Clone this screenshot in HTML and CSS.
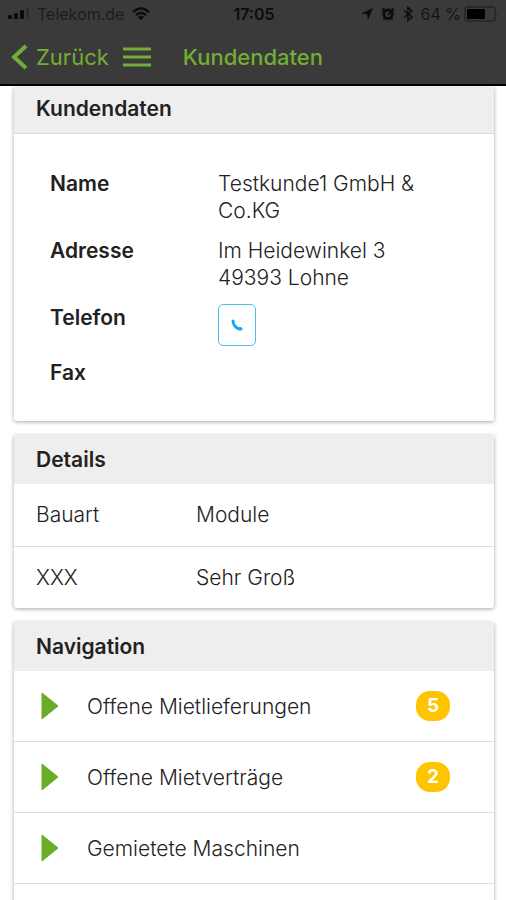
FILE: index.html
```html
<!DOCTYPE html>
<html lang="de">
<head>
<meta charset="utf-8">
<meta name="viewport" content="width=device-width, initial-scale=1">
<title>Kundendaten</title>
<link rel="stylesheet" href="styles.css">
</head>
<body>
<div class="app">
  <header class="topbar">
    <div class="status">
      <div class="status-left">
        <svg width="22" height="14" viewBox="0 0 22 14" aria-hidden="true">
          <rect x="0" y="8" width="4" height="4" rx="1"/><rect x="6" y="6" width="4" height="6" rx="1"/><rect x="12" y="3" width="4" height="9" rx="1"/><rect x="18" y="1" width="3" height="11" rx="1" opacity=".3"/>
        </svg>
        <span class="carrier">Telekom.de</span>
        <svg width="20" height="14" viewBox="0 0 20 14" aria-hidden="true">
          <path d="M2 5Q10-2 18 5M5 8.200Q10 4 15 8.200" fill="none" stroke="currentColor" stroke-width="2.400"/>
          <path d="M6.800 10Q10 7.500 13.200 10L10 13.200Z"/>
        </svg>
      </div>
      <span class="clock">17:05</span>
      <div class="status-right">
        <svg width="14" height="14" viewBox="0 0 14 14" aria-hidden="true"><path d="M13 1L8 13L7 7L1 6.500Z"/></svg>
        <svg width="14" height="14" viewBox="0 0 14 14" aria-hidden="true">
          <path d="M1 3.500L3.500 1M13 3.500L10.500 1M3.500 11.500L2.500 13M10.500 11.500L11.500 13" stroke="currentColor" stroke-width="1.500"/>
          <circle cx="7" cy="7.200" r="4.300" fill="none" stroke="currentColor" stroke-width="3"/>
          <path d="M7 8L9.500 5" stroke="currentColor" stroke-width="1.500"/>
        </svg>
        <svg width="12" height="16" viewBox="0 0 12 16" aria-hidden="true"><path d="M2 4.500L10 11L6 14.500V1.500L10 5L2 11.500" fill="none" stroke="currentColor" stroke-width="1.500"/></svg>
        <span class="percent">64 %</span>
        <svg class="battery" width="36" height="16" viewBox="0 0 36 16" aria-hidden="true">
          <rect x="1" y="1" width="30" height="14" rx="3" fill="none" stroke="#262626" stroke-width="1.500"/>
          <rect x="3" y="3" width="18" height="10" rx="1" fill="#000"/><path d="M33 6Q35 8 33 10Z" fill="#262626"/>
        </svg>
      </div>
    </div>
    <nav class="toolbar">
      <a class="back" href="#">
        <svg width="17" height="26" viewBox="0 0 17 26" aria-hidden="true"><path d="M15 2L3 13L15 24" fill="none" stroke="currentColor" stroke-width="4"/></svg>
        <span>Zurück</span>
      </a>
      <button class="menu" type="button" aria-label="Menü">
        <svg width="28" height="20" viewBox="0 0 28 20" aria-hidden="true"><path d="M0 2H28M0 10H28M0 18H28" stroke="currentColor" stroke-width="3"/></svg>
      </button>
      <h1 class="title">Kundendaten</h1>
    </nav>
  </header>

  <main class="content">
    <section class="card">
      <h2 class="card-head lined">Kundendaten</h2>
      <dl class="facts">
        <dt>Name</dt><dd>Testkunde1 GmbH &amp; Co.KG</dd>
        <dt>Adresse</dt><dd>Im Heidewinkel 3<br>49393 Lohne</dd>
        <dt>Telefon</dt>
        <dd>
          <button class="call" type="button" aria-label="Anrufen">
            <svg width="12" height="12" viewBox="0 0 12 12" aria-hidden="true"><path d="M.5 2Q.8.700 2 .4Q3.200.5 3.800 2.600Q4 3.400 3.400 4.100Q5 6.800 7.700 8.400Q8.600 7.600 9.400 7.900L11.400 8.900Q12 9.600 11 10.900Q9.800 12 7.300 11.200Q1.200 8.800.5 2Z"/></svg>
          </button>
        </dd>
        <dt>Fax</dt><dd></dd>
      </dl>
    </section>

    <section class="card">
      <h2 class="card-head">Details</h2>
      <table class="details">
        <tr><th scope="row">Bauart</th><td>Module</td></tr>
        <tr><th scope="row">XXX</th><td>Sehr Groß</td></tr>
      </table>
    </section>

    <section class="card">
      <h2 class="card-head">Navigation</h2>
      <ul class="links">
        <li><a href="#"><svg class="arrow" width="18" height="28" viewBox="0 0 18 28" aria-hidden="true"><path d="M1 1L17 14L1 27Z" stroke="currentColor" stroke-linejoin="round"/></svg><span class="label">Offene Mietlieferungen</span><span class="badge">5</span></a></li>
        <li><a href="#"><svg class="arrow" width="18" height="28" viewBox="0 0 18 28" aria-hidden="true"><path d="M1 1L17 14L1 27Z" stroke="currentColor" stroke-linejoin="round"/></svg><span class="label">Offene Mietverträge</span><span class="badge">2</span></a></li>
        <li><a href="#"><svg class="arrow" width="18" height="28" viewBox="0 0 18 28" aria-hidden="true"><path d="M1 1L17 14L1 27Z" stroke="currentColor" stroke-linejoin="round"/></svg><span class="label">Gemietete Maschinen</span></a></li>
        <li><a href="#" aria-label="Weitere"></a></li>
      </ul>
    </section>
  </main>
</div>
</body>
</html>
```
FILE: styles.css
```css
* { box-sizing: border-box; }

body {
  margin: 0;
  background: #fff;
  color: #222;
  font: 300 21px/27px Inter, "Liberation Sans", sans-serif;
}

h1, h2, dl, dd, ul { margin: 0; padding: 0; }
a { color: inherit; text-decoration: none; }
button { padding: 0; border: 0; background: none; color: inherit; }
svg { display: block; flex: none; fill: currentColor; }

.app {
  display: flex;
  flex-direction: column;
  height: 100vh;
  overflow: hidden;
}

/* Top bar */
.topbar {
  position: relative;
  flex: none;
  background: #3a3a3a;
  border-bottom: 2px solid #000;
}

.status {
  display: grid;
  grid-template-columns: 1fr auto 1fr;
  align-items: center;
  height: 28px;
  padding: 0 6px 0 8px;
  color: #0c0c0c;
  font-size: 16px;
}

.status-left, .status-right { display: flex; align-items: center; gap: 7px; }
.status-right { justify-content: flex-end; }
.carrier { color: #1c1c1c; font-weight: 400; }
.clock { font-weight: 600; }
.percent { color: #151515; font-weight: 400; }
.battery { margin-left: -4px; }

.toolbar {
  display: flex;
  align-items: center;
  height: 56px;
  padding: 2px 11px 0;
  color: #72ae35;
}

.back { display: flex; align-items: center; gap: 8px; font-size: 22px; font-weight: 400; }
.menu { margin-left: 14px; }
.title { margin-left: 32px; font-size: 22px; font-weight: 500; }

/* Cards */
.content { flex: 1; min-height: 0; padding: 0 12px 0 14px; }

.card {
  margin-bottom: 14px;
  border-radius: 3px;
  background: #fff;
  box-shadow: 0 1px 4px rgba(0, 0, 0, .35);
  overflow: hidden;
}

.card-head {
  padding: 11px 22px;
  background: #eee;
  font-size: 21px;
  font-weight: 600;
}

.card-head.lined {
  padding-top: 9px;
  border-bottom: 1px solid #ddd;
}

.facts {
  display: grid;
  grid-template-columns: 7fr 10fr;
  row-gap: 13px;
  padding: 36px 36px 35px;
}

.facts dt { font-weight: 600; }

.call {
  display: grid;
  place-items: center;
  width: 38px;
  height: 42px;
  border: 1px solid #4fbdf0;
  border-radius: 5px;
  color: #12a9ea;
}

.details { width: 100%; border-collapse: collapse; }
.details th, .details td { height: 62px; padding: 0; text-align: left; font-weight: 300; }
.details th { width: 182px; padding-left: 22px; }
.details tr + tr { border-top: 1px solid #ddd; }

.links { list-style: none; }
.links li + li { border-top: 1px solid #ddd; }

.links a {
  display: flex;
  align-items: center;
  height: 70px;
  padding: 0 44px 0 27px;
}

.arrow { color: #69ac27; }
.label { flex: 1; margin-left: 28px; }

.badge {
  width: 34px;
  border-radius: 14px;
  background: #ffc400;
  color: #fff;
  font-size: 19px;
  font-weight: 700;
  line-height: 30px;
  text-align: center;
}
```
